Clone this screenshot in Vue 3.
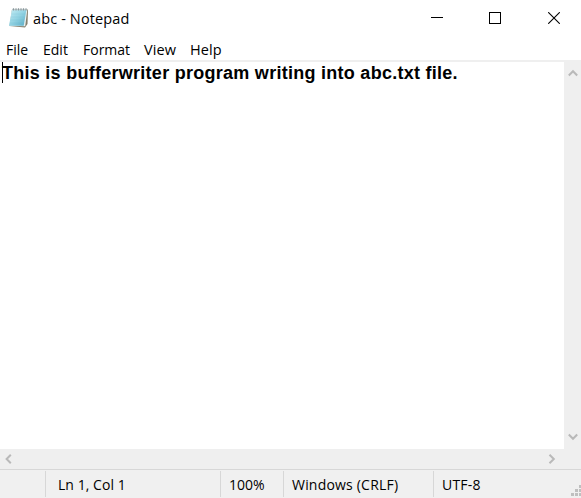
<script setup>
const menus = [
  { label: 'File', cls: 'file' },
  { label: 'Edit', cls: 'edit' },
  { label: 'Format', cls: 'format' },
  { label: 'View', cls: 'view' },
  { label: 'Help', cls: 'help' },
]
</script>

<template>
  <div class="window">
    <header class="titlebar">
      <svg class="app-icon" width="22" height="22" viewBox="0 0 22 22">
        <defs>
          <linearGradient id="pad" x1="0" y1="0" x2="1" y2="1">
            <stop offset="0" stop-color="#c5edf5" />
            <stop offset="0.5" stop-color="#93d3e3" />
            <stop offset="1" stop-color="#58abc5" />
          </linearGradient>
        </defs>
        <path d="M4 2.5H20L19.5 17L17 20.5L1.5 19Z" fill="#857f6d" />
        <path d="M4 2.5H19.3L17.2 19.2L1.2 18.8Z" fill="#e6eff0" />
        <path d="M4 2.5H18.5L15.7 18.7H1Z" fill="url(#pad)" />
        <path d="M3.5 7H17M3 10H16.5M2.5 13H16M2 16H15.5" stroke="#68b6ca" stroke-width=".5" opacity=".35" />
        <path d="M4 2.5H19" stroke="#c0cacc" stroke-width="1.4" />
        <path d="M5.5 1.2V3.5M8 1.2V3.5M10.5 1.2V3.5M13 1.2V3.5M15.5 1.2V3.5M18 1.2V3.5" stroke="#7c8c90" stroke-width=".8" />
      </svg>
      <span class="title">abc - Notepad</span>
      <div class="controls">
        <svg width="12" height="12" viewBox="0 0 12 12" shape-rendering="crispEdges"><path d="M0 5.5H12" stroke="#000" /></svg>
        <svg width="12" height="12" viewBox="0 0 12 12" shape-rendering="crispEdges"><rect x=".5" y=".5" width="11" height="11" fill="none" stroke="#000" /></svg>
        <svg width="12" height="12" viewBox="0 0 12 12"><path d="M.2 .2L11.8 11.8M11.8 .2L.2 11.8" stroke="#000" stroke-width="1.1" /></svg>
      </div>
    </header>
    <nav class="menubar">
      <span v-for="m in menus" :key="m.label" :class="m.cls">{{ m.label }}</span>
    </nav>
    <main class="editor">
      <div class="page"><i class="caret"></i><span class="text">This is bufferwriter program writing into abc.txt file.</span></div>
      <div class="vscroll">
        <svg width="10" height="8" viewBox="0 0 10 8"><path d="M.8 6.5L5 2.2L9.2 6.5" /></svg>
        <svg width="10" height="8" viewBox="0 0 10 8"><path d="M.8 1.5L5 5.8L9.2 1.5" /></svg>
      </div>
    </main>
    <div class="hscroll">
      <svg width="8" height="10" viewBox="0 0 8 10"><path d="M6.8 .8L2.6 5L6.8 9.2" /></svg>
      <svg width="8" height="10" viewBox="0 0 8 10"><path d="M1.5 .8L5.8 5L1.5 9.2" /></svg>
    </div>
    <footer class="status">
      <div class="cell"></div>
      <div class="cell position"><span>Ln 1, Col 1</span></div>
      <div class="cell zoom"><span>100%</span></div>
      <div class="cell ending"><span>Windows (CRLF)</span></div>
      <div class="cell encoding"><span>UTF-8</span>
        <svg class="grip" width="10" height="11" viewBox="0 0 10 11" fill="#bfbfbf" shape-rendering="crispEdges">
          <path d="M8 0h2v3H8zM4 4h3v3H4zM8 4h2v3H8zM0 8h3v3H0zM4 8h3v3H4zM8 8h2v3H8z" />
        </svg>
      </div>
    </footer>
  </div>
</template>

<style>
body { margin: 0; overflow: hidden; }
</style>

<style scoped>
.window {
  width: 581px;
  height: 498px;
  display: grid;
  grid-template-rows: 38px 22px 389px 20px 29px;
  background: #fff;
  color: #000;
  font: 14px/20px "Open Sans", "Noto Sans", sans-serif;
  white-space: nowrap;
  overflow: hidden;
}
svg { display: block; flex: none; }
.titlebar { display: flex; padding-left: 8px; }
.app-icon { margin-top: 7px; }
.title { margin: 9px 0 0 3px; font-size: 14.5px; letter-spacing: .13px; }
.controls { display: flex; gap: 46px; margin: 12px 21px 0 auto; }
.controls svg:last-child { margin-left: 1px; }
.menubar { display: grid; grid-template-columns: 37px 40px 61px 46px 40px; padding: 2px 0 0 6px; }
.view, .help { font-size: 14.5px; letter-spacing: .1px; }
.editor { display: grid; grid-template-columns: 1fr 17px; border-top: 2px solid #efefef; }
.page { display: flex; padding-left: 2px; }
.caret { width: 1px; height: 21px; background: #000; }
.text { margin-left: -1px; font: bold 18px/22px "Liberation Sans", Arial, sans-serif; letter-spacing: .27px; }
.vscroll { display: flex; flex-direction: column; justify-content: space-between; align-items: center; background: #efefef; padding: 7px 0 8px 1px; }
.hscroll { display: flex; justify-content: space-between; align-items: center; background: #efefef; padding: 0 25px 1px 4px; }
.vscroll path, .hscroll path { fill: none; stroke: #b9b9b9; stroke-width: 2; }
.status { display: grid; grid-template-columns: 46px 175px 63px 150px 1fr; border-top: 1px solid #d7d7d7; background: #f0f0f0; padding-top: 1px; }
.cell { display: flex; box-sizing: border-box; height: 26px; border-right: 1px solid #d7d7d7; padding-top: 4px; }
.position { padding-left: 12px; letter-spacing: .05px; }
.zoom { padding-left: 8px; }
.ending { padding-left: 8px; letter-spacing: .2px; }
.encoding { padding-left: 8px; border: 0; justify-content: space-between; letter-spacing: .2px; }
.grip { margin-top: 10px; }
</style>
